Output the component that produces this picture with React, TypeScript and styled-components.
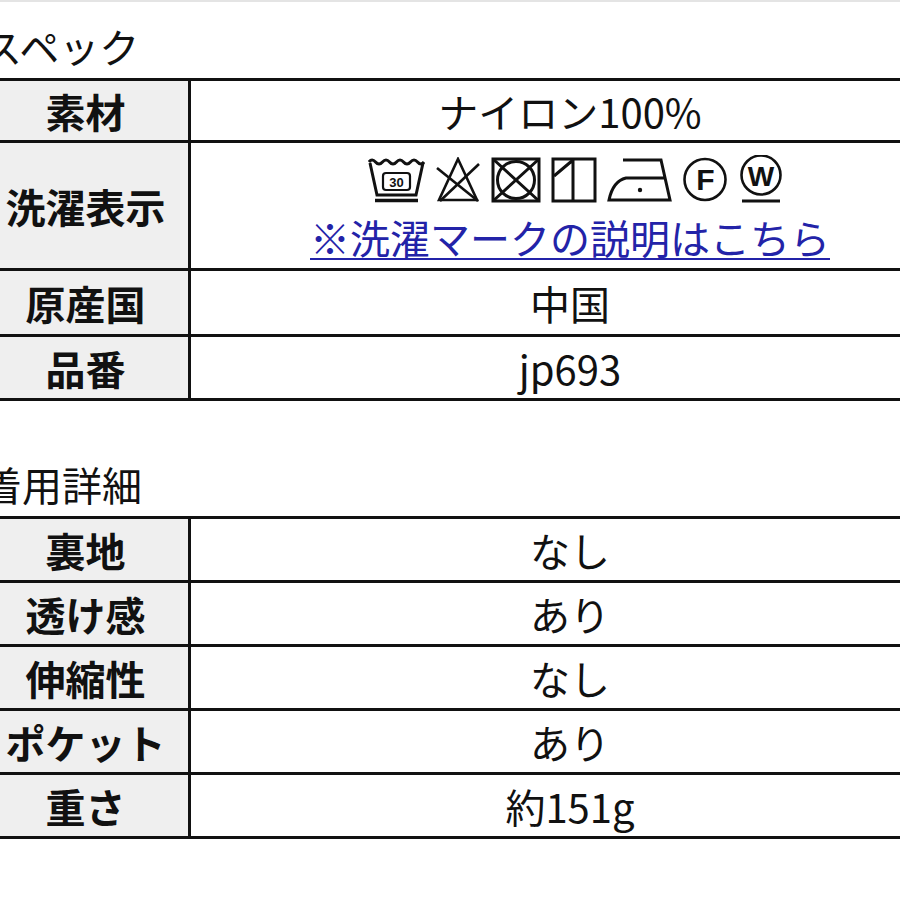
import styled, { createGlobalStyle } from "styled-components";

const GlobalStyle = createGlobalStyle`
  html, body {
    margin: 0;
    padding: 0;
    background: #ffffff;
    overflow: hidden;
  }
  body {
    font-family: "Noto Sans CJK JP", "Noto Sans", sans-serif;
    color: #111111;
  }
`;

const Page = styled.div`
  width: 972px;
  margin-left: -20px;
  border-top: 2px solid #e4e4e4;
  padding-top: 20px;
`;

const SectionTitle = styled.h2<{ $gap?: number }>`
  margin: ${(p) => p.$gap ?? 0}px 0 8px 2px;
  font-size: 40px;
  font-weight: 400;
  line-height: 48px;
  white-space: nowrap;
`;

const SpecTable = styled.table`
  width: 972px;
  border-collapse: collapse;
  table-layout: fixed;
  border: 3px solid #111111;
`;

const Row = styled.tr<{ $h: number }>`
  height: ${(p) => p.$h}px;
`;

const Label = styled.th`
  width: 205px;
  padding: 0;
  border: 3px solid #111111;
  background: #efefef;
  font-size: 40px;
  font-weight: 700;
  line-height: 1.3;
  text-align: center;
  white-space: nowrap;
`;

const Value = styled.td`
  padding: 0;
  border: 3px solid #111111;
  background: #ffffff;
  font-size: 40px;
  font-weight: 400;
  line-height: 1.3;
  text-align: center;
  white-space: nowrap;
`;

const IconRow = styled.div`
  display: flex;
  justify-content: center;
  align-items: flex-end;
  gap: 10px;
  height: 48px;
  margin-top: 8px;
  padding-left: 12px;
`;

const Icon = styled.svg`
  display: block;
  flex-shrink: 0;
  fill: none;
  stroke: #111111;
  stroke-width: 3;
`;

const HelpLink = styled.a`
  display: inline-block;
  margin-top: 12px;
  margin-bottom: 6px;
  color: #2323a8;
  text-decoration: underline;
  text-decoration-thickness: 2px;
  text-underline-offset: 4px;
  line-height: 44px;
`;

const WashIcon = () => (
  <Icon width="57" height="46" viewBox="0 0 57 46">
    <path d="M1 5 Q4 1 7.5 5 T14.5 5 T21.5 5 T28.5 5 T35.5 5 T42.5 5 T49.5 5 T56 5" />
    <path d="M2 6 L9 38 H48 L55 6" />
    <path d="M7 43.5 H50" strokeWidth="3.4" />
    <rect x="15" y="16" width="27" height="17" rx="3" strokeWidth="2.2" />
    <text x="28.5" y="30" fontSize="13" fontWeight="700" textAnchor="middle" fill="#111" stroke="none" fontFamily="Liberation Sans, sans-serif">30</text>
  </Icon>
);

const BleachIcon = () => (
  <Icon width="46" height="46" viewBox="0 0 46 46">
    <path d="M23 2 L42 43 H4 Z" strokeWidth="2.6" />
    <path d="M2 11 L43 44" strokeWidth="2.6" />
    <path d="M44 7 L5 44" strokeWidth="2.6" />
  </Icon>
);

const DryIcon = () => (
  <Icon width="50" height="46" viewBox="0 0 50 46">
    <rect x="2" y="2" width="46" height="42" />
    <circle cx="25" cy="23" r="18.5" />
    <path d="M2 2 L48 44 M48 2 L2 44" />
  </Icon>
);

const LineDryIcon = () => (
  <Icon width="46" height="46" viewBox="0 0 46 46">
    <rect x="2" y="2" width="42" height="42" />
    <path d="M3 19 L22 3 M22 2 V44" />
  </Icon>
);

const IronIcon = () => (
  <Icon width="65" height="46" viewBox="0 0 65 46">
    <path d="M16 3 H54 L63 43 H2 Q6 24 19 21 H58" />
    <circle cx="33" cy="33" r="2.2" fill="#111" stroke="none" />
  </Icon>
);

const DryCleanIcon = () => (
  <Icon width="46" height="46" viewBox="0 0 46 46">
    <circle cx="23" cy="22.5" r="20.5" strokeWidth="2.6" />
    <text x="23.5" y="33" fontSize="30" fontWeight="700" textAnchor="middle" fill="#111" stroke="none" fontFamily="Liberation Sans, sans-serif">F</text>
  </Icon>
);

const WetCleanIcon = () => (
  <Icon width="46" height="48" viewBox="0 0 46 48">
    <circle cx="23" cy="20" r="19.5" strokeWidth="2.6" />
    <text x="23" y="31" fontSize="28" fontWeight="700" textAnchor="middle" fill="#111" stroke="none" fontFamily="Liberation Sans, sans-serif">W</text>
    <path d="M4 46 H42" strokeWidth="3.2" />
  </Icon>
);

const specRows = [
  { label: "素材", value: "ナイロン100%", h: 62 },
];

const tailRows = [
  { label: "原産国", value: "中国", h: 66 },
  { label: "品番", value: "jp693", h: 64 },
];

const fitRows = [
  { label: "裏地", value: "なし" },
  { label: "透け感", value: "あり" },
  { label: "伸縮性", value: "なし" },
  { label: "ポケット", value: "あり" },
  { label: "重さ", value: "約151g" },
];

export default function App() {
  return (
    <>
      <GlobalStyle />
      <Page>
        <SectionTitle>スペック</SectionTitle>
        <SpecTable>
          <tbody>
            {specRows.map((r) => (
              <Row key={r.label} $h={r.h}>
                <Label>{r.label}</Label>
                <Value>{r.value}</Value>
              </Row>
            ))}
            <Row $h={128}>
              <Label>洗濯表示</Label>
              <Value>
                <IconRow>
                  <WashIcon />
                  <BleachIcon />
                  <DryIcon />
                  <LineDryIcon />
                  <IronIcon />
                  <DryCleanIcon />
                  <WetCleanIcon />
                </IconRow>
                <HelpLink href="#">※洗濯マークの説明はこちら</HelpLink>
              </Value>
            </Row>
            {tailRows.map((r) => (
              <Row key={r.label} $h={r.h}>
                <Label>{r.label}</Label>
                <Value>{r.value}</Value>
              </Row>
            ))}
          </tbody>
        </SpecTable>

        <SectionTitle $gap={59}>着用詳細</SectionTitle>
        <SpecTable>
          <tbody>
            {fitRows.map((r) => (
              <Row key={r.label} $h={64}>
                <Label>{r.label}</Label>
                <Value>{r.value}</Value>
              </Row>
            ))}
          </tbody>
        </SpecTable>
      </Page>
    </>
  );
}
